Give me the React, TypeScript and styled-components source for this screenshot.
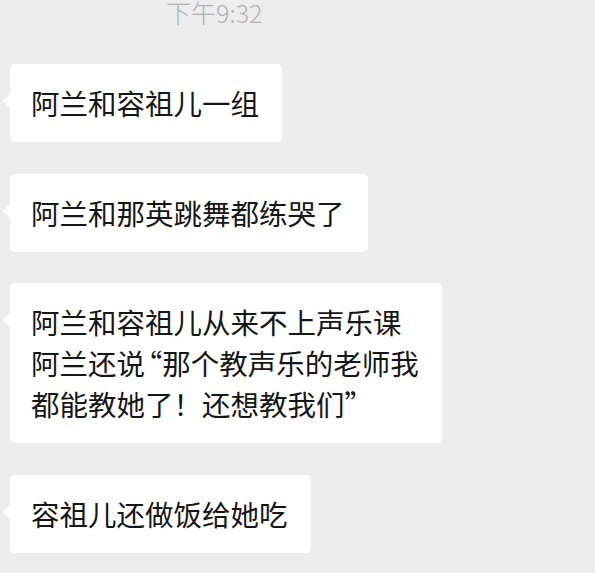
import * as React from "react";
import styled, { createGlobalStyle } from "styled-components";

const GlobalStyle = createGlobalStyle`
  html, body {
    margin: 0;
    padding: 0;
    background: #ededed;
  }
  body {
    font-family: "Noto Sans CJK SC", "Noto Sans", sans-serif;
  }
`;

const SPage = styled.div`
  width: 595px;
  height: 573px;
  overflow: hidden;
  display: flex;
  flex-direction: column;
  align-items: flex-start;
  background: #ededed;
`;

const STime = styled.div`
  padding-left: 166px;
  font-size: 25px;
  font-weight: 300;
  line-height: 24px;
  color: #b0b0b0;
`;

const SList = styled.div`
  margin-top: 40px;
  padding-left: 10px;
  display: flex;
  flex-direction: column;
  align-items: flex-start;
  gap: 31.5px;
`;

const SBubble = styled.div`
  position: relative;
  background: #ffffff;
  border-radius: 5px;
  padding: 18px 23px 19px 21px;
  font-size: 28.5px;
  line-height: 41px;
  color: #161616;
  white-space: nowrap;

  &::before {
    content: "";
    position: absolute;
    left: -7px;
    top: 30px;
    border-style: solid;
    border-width: 7px 7px 7px 0;
    border-color: transparent #ffffff transparent transparent;
  }
`;

// the chat font sets quotes narrower than a full em, so trim the empty side
const SQuote = styled.span<{ $open: boolean }>`
  margin-left: ${(p) => (p.$open ? "-0.4em" : "0")};
  margin-right: ${(p) => (p.$open ? "0" : "-0.4em")};
`;

const messages: string[][] = [
  ["阿兰和容祖儿一组"],
  ["阿兰和那英跳舞都练哭了"],
  ["阿兰和容祖儿从来不上声乐课", "阿兰还说“那个教声乐的老师我", "都能教她了！还想教我们”"],
  ["容祖儿还做饭给她吃"],
];

const renderLine = (line: string) =>
  line.split(/([“”])/).map((part, k) =>
    part === "“" || part === "”" ? (
      <SQuote key={k} $open={part === "“"}>
        {part}
      </SQuote>
    ) : (
      part
    )
  );

const App = () => (
  <SPage>
    <GlobalStyle />
    <STime>下午9:32</STime>
    <SList>
      {messages.map((lines, i) => (
        <SBubble key={i} lang="zh-CN">
          {lines.map((line, j) => (
            <div key={j}>{renderLine(line)}</div>
          ))}
        </SBubble>
      ))}
    </SList>
  </SPage>
);

export default App;
